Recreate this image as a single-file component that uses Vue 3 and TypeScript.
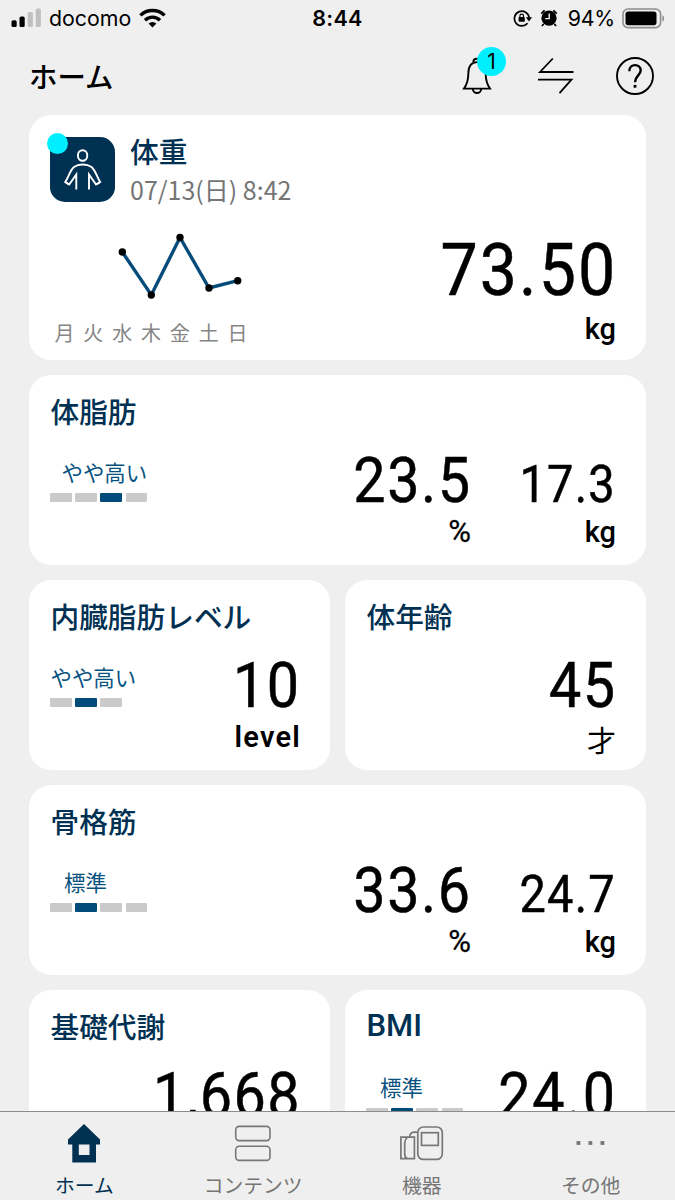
<script setup lang="ts">
interface Reading {
  value: string
  unit: string
  size: 'main' | 'sub'
  unitStyle?: 'cjk' | 'sign' | 'word'
}

interface Level {
  label: string
  steps: number
  active: number
  align: 'start' | 'shift' | 'end'
}

interface Metric {
  title: string
  wide: boolean
  latin?: boolean
  level?: Level
  readings: Reading[]
}

const metrics: Metric[] = [
  {
    title: '体脂肪',
    wide: true,
    level: { label: 'やや高い', steps: 4, active: 3, align: 'end' },
    readings: [
      { value: '23.5', unit: '%', size: 'main', unitStyle: 'sign' },
      { value: '17.3', unit: 'kg', size: 'sub' },
    ],
  },
  {
    title: '内臓脂肪レベル',
    wide: false,
    level: { label: 'やや高い', steps: 3, active: 2, align: 'start' },
    readings: [{ value: '10', unit: 'level', size: 'main', unitStyle: 'word' }],
  },
  {
    title: '体年齢',
    wide: false,
    readings: [{ value: '45', unit: '才', size: 'main', unitStyle: 'cjk' }],
  },
  {
    title: '骨格筋',
    wide: true,
    level: { label: '標準', steps: 4, active: 2, align: 'shift' },
    readings: [
      { value: '33.6', unit: '%', size: 'main', unitStyle: 'sign' },
      { value: '24.7', unit: 'kg', size: 'sub' },
    ],
  },
  {
    title: '基礎代謝',
    wide: false,
    readings: [{ value: '1,668', unit: '', size: 'main' }],
  },
  {
    title: 'BMI',
    wide: false,
    latin: true,
    level: { label: '標準', steps: 4, active: 2, align: 'shift' },
    readings: [{ value: '24.0', unit: '', size: 'main' }],
  },
]

const days: string[] = ['月', '火', '水', '木', '金', '土', '日']

const points: [number, number][] = [
  [72.3, 22],
  [101.3, 65],
  [130, 7.5],
  [159, 58],
  [187.7, 50.7],
]
const line = points.map((p) => p.join(',')).join(' ')
</script>

<template>
  <div class="screen">
    <div class="status">
      <div class="status-left">
        <svg class="signal" width="31" height="20" viewBox="0 0 31 20">
          <rect x="0.5" y="12.3" width="5.2" height="6.7" rx="1.6" fill="#000" />
          <rect x="8.5" y="8.6" width="5.2" height="10.4" rx="1.6" fill="#000" />
          <rect x="16.7" y="4" width="5.2" height="15" rx="1.6" fill="#c0c0c0" />
          <rect x="24.7" y="0.5" width="5.2" height="18.5" rx="1.6" fill="#c0c0c0" />
        </svg>
        <span class="carrier">docomo</span>
        <svg class="wifi" width="27" height="20" viewBox="0 0 27 20">
          <g fill="none" stroke="#000" stroke-width="3.4">
            <path d="M1.4 7.4a17.3 17.3 0 0 1 24.2 0" />
            <path d="M6 12.2a10.7 10.7 0 0 1 15 0" />
          </g>
          <path d="M13.5 19.6l-3.9-4a5.6 5.6 0 0 1 7.8 0z" />
        </svg>
      </div>
      <span class="clock">8:44</span>
      <div class="status-right">
        <svg width="20" height="18" viewBox="0 0 20 18">
          <path d="M14.6 14.2a7.4 7.4 0 1 1 1.6-5.6" fill="none" stroke="#000" stroke-width="1.7" />
          <path d="M12.9 8.2h6.2l-3.2 4.3z" />
          <rect x="5.6" y="8" width="6.2" height="4.8" rx="0.8" />
          <path d="M6.900 8.400V6.900a1.800 1.800 0 0 1 3.600 0v1.500" fill="none" stroke="#000" stroke-width="1.200" />
        </svg>
        <svg class="alarm" width="18" height="18" viewBox="0 0 18 18">
          <circle cx="9" cy="9.2" r="7.6" />
          <path d="M1.3 4.6l3.3-3.2M16.7 4.6l-3.3-3.2M3.6 15l-1.6 2M14.4 15l1.6 2" stroke="#000" stroke-width="1.8" />
          <path d="M9.2 4.6v5H5.2" fill="none" stroke="#efefef" stroke-width="1.4" />
        </svg>
        <span class="percent">94%</span>
        <svg class="battery" width="44" height="21" viewBox="0 0 44 21">
          <rect x="1" y="1" width="37.6" height="18.6" rx="5" fill="none" stroke="#8d8d8d" stroke-width="1.6" />
          <rect x="3.5" y="3.6" width="31" height="13.6" rx="2.6" />
          <path d="M40.4 7.2c2.3 1 2.3 5.400 0 6.400z" fill="#8d8d8d" />
        </svg>
      </div>
    </div>

    <header class="header">
      <h1>ホーム</h1>
      <div class="actions">
        <button class="action bell" aria-label="通知">
          <svg width="30" height="40" viewBox="0 0 30 40" fill="none" stroke="#000" stroke-width="1.9">
            <path d="M11.300 6.100C11.300 1.600 18.700 1.600 18.700 6.100" />
            <path d="M2 32.600C5.500 27.500 6.300 24 6.300 18C6.300 10.500 9 6.100 15 6.100C21 6.100 23.700 10.500 23.700 18C23.700 24 24.500 27.500 28 32.600Z" />
            <path d="M10.800 32.800a4.200 4.200 0 0 0 8.400 0" />
          </svg>
          <span class="badge">1</span>
        </button>
        <button class="action swap" aria-label="同期">
          <svg width="38" height="38" viewBox="0 0 38 38" fill="none" stroke="#000" stroke-width="1.8">
            <path d="M15.800 1.500L3 15H36.500M1 22.700H34.500L22.500 36.200" />
          </svg>
        </button>
        <button class="action help" aria-label="ヘルプ">
          <svg width="40" height="40" viewBox="0 0 40 40" fill="none" stroke="#000">
            <circle cx="20" cy="20" r="18" stroke-width="1.900" />
            <path d="M14.300 15.200C14.300 7.200 25.700 7.200 25.700 14.500C25.700 19.200 20 19.700 20 26.200" stroke-width="2.400" />
            <rect x="18.600" y="28.900" width="2.800" height="2.800" fill="#000" stroke="none" />
          </svg>
        </button>
      </div>
    </header>

    <main class="content">
      <section class="card weight">
        <div class="weight-head">
          <div class="app-icon">
            <svg width="65" height="65" viewBox="0 0 65 65" fill="none" stroke="#fff" stroke-width="1.900">
              <ellipse cx="32.600" cy="18.500" rx="4.700" ry="5.300" />
              <path d="M26.300 52.500V37.500L19.200 47.500L16.200 45.500M39 52.500V37.500L46 47.500L49.200 45.500" />
              <path d="M19 47.500L15.200 45C18.500 40.500 19.500 34 24 30C28.500 26.700 37 26.700 41.500 30C46 34 47 40.500 50.200 45L46.300 47.500" />
            </svg>
            <i class="dot"></i>
          </div>
          <div>
            <h2>体重</h2>
            <p class="date">07/13(日) 8:42</p>
          </div>
        </div>
        <div class="weight-body">
          <div class="week">
            <svg width="202" height="80" viewBox="0 0 202 80">
              <polyline :points="line" fill="none" stroke="#064c7a" stroke-width="3.400" />
              <circle v-for="(p, i) in points" :key="i" :cx="p[0]" :cy="p[1]" r="3.700" />
            </svg>
            <div class="days">
              <span v-for="d in days" :key="d">{{ d }}</span>
            </div>
          </div>
          <div class="reading hero">
            <div class="value">73.50</div>
            <div class="unit">kg</div>
          </div>
        </div>
      </section>

      <section v-for="m in metrics" :key="m.title" class="card metric" :class="{ wide: m.wide }">
        <h2 :class="{ latin: m.latin }">{{ m.title }}</h2>
        <div class="metric-body">
          <div v-if="m.level" class="level">
            <span class="level-label" :class="m.level.align">{{ m.level.label }}</span>
            <div class="bars">
              <i v-for="n in m.level.steps" :key="n" :class="{ on: n === m.level.active }"></i>
            </div>
          </div>
          <div class="readings">
            <div v-for="r in m.readings" :key="r.value" class="reading" :class="r.size">
              <div class="value">{{ r.value }}</div>
              <div v-if="r.unit" class="unit" :class="r.unitStyle">{{ r.unit }}</div>
            </div>
          </div>
        </div>
      </section>
    </main>

    <nav class="tabs">
      <a class="tab current">
        <svg width="44" height="40" viewBox="0 0 44 40">
          <path fill-rule="evenodd" fill="#003153" d="M22 1L38 16.500V21.500H34V39.500H10.300V21.500H6V16.500ZM16.800 21.500V32H27.500V21.500Z" />
        </svg>
        <span>ホーム</span>
      </a>
      <a class="tab">
        <svg width="44" height="40" viewBox="0 0 44 40" fill="none" stroke="#777" stroke-width="1.600">
          <rect x="4.700" y="3.400" width="34.300" height="14.200" rx="3.500" />
          <rect x="4.700" y="23.200" width="34.300" height="14.200" rx="3.500" />
        </svg>
        <span>コンテンツ</span>
      </a>
      <a class="tab">
        <svg width="44" height="40" viewBox="0.800 0 44 40" fill="none" stroke="#777" stroke-width="1.700">
          <rect x="18.600" y="4" width="24.500" height="32.400" rx="5.500" />
          <rect x="22.300" y="9.700" width="16.800" height="12.700" />
          <path d="M1.700 14.100H15.200V35.600H1.700ZM18.600 9.200H15.500C12.500 9.200 10.600 10.500 10.400 14M8.200 14.100C6 16 5.500 17.500 5.500 20V30.500C5.500 33.300 6.500 35 8.500 35.600" />
        </svg>
        <span>機器</span>
      </a>
      <a class="tab">
        <svg width="44" height="40" viewBox="0 0 44 40" fill="#777">
          <rect x="7.500" y="18.100" width="3.800" height="3.800" />
          <rect x="19.500" y="18.100" width="3.800" height="3.800" />
          <rect x="31.500" y="18.100" width="3.800" height="3.800" />
        </svg>
        <span>その他</span>
      </a>
    </nav>
  </div>
</template>

<style>
body {
  background: #efefef;
}
</style>

<style scoped>
.screen {
  width: 675px;
  height: 1200px;
  display: flex;
  flex-direction: column;
  overflow: hidden;
  background: #efefef;
  color: #000;
  font-family: 'Noto Sans CJK JP', sans-serif;
}

h1,
h2,
p {
  margin: 0;
}

svg {
  display: block;
  flex: none;
}

.status {
  flex: none;
  height: 36px;
  display: grid;
  grid-template-columns: 1fr auto 1fr;
  align-items: center;
  font-family: Inter, sans-serif;
  font-size: 22px;
  line-height: 36px;
}

.status-left,
.status-right {
  display: flex;
  align-items: center;
}

.status-left {
  padding-left: 11px;
}

.carrier {
  margin-left: 7px;
  width: 82px;
  font-size: 21.300px;
}

.wifi {
  margin-left: 8px;
}

.clock {
  font-size: 21.500px;
  font-weight: 600;
  letter-spacing: 0.3px;
}

.status-right {
  justify-content: flex-end;
  padding-right: 9px;
}

.alarm {
  margin-left: 7px;
}

.percent {
  margin: 0 7px 0 10px;
  font-size: 21.300px;
  letter-spacing: -0.2px;
}

.header {
  flex: none;
  height: 79px;
  padding: 0 20px 0 29px;
  display: flex;
  align-items: center;
  justify-content: space-between;
}

h1 {
  margin-top: 1px;
  font-size: 28.400px;
  font-weight: 500;
  line-height: 40px;
}

.actions {
  display: flex;
  align-items: center;
}

.action {
  position: relative;
  padding: 0;
  border: 0;
  background: none;
}

.swap {
  margin-left: 45px;
}

.help {
  margin-left: 40px;
}

.badge {
  position: absolute;
  left: 15px;
  top: -9px;
  width: 29px;
  height: 29px;
  border-radius: 50%;
  background: #00efff;
  font-family: Inter, sans-serif;
  font-size: 21px;
  line-height: 29px;
  text-align: center;
}

.content {
  flex: 1;
  min-height: 0;
  overflow: hidden;
  padding: 0 29px;
  display: grid;
  grid-template-columns: 301px 301px;
  grid-template-rows: 245px;
  grid-auto-rows: 190px;
  gap: 15px;
  align-content: start;
}

.card {
  box-sizing: border-box;
  border-radius: 22px;
  background: #fff;
}

h2 {
  color: #003153;
  font-size: 28.700px;
  font-weight: 500;
  line-height: 42px;
}

.latin {
  font-family: Roboto, sans-serif;
  font-size: 31px;
}

.weight {
  grid-column: 1 / -1;
  padding: 15px 30px 0 21px;
}

.weight-head {
  display: flex;
  gap: 15px;
}

.app-icon {
  position: relative;
  width: 65px;
  height: 65px;
  margin-top: 7px;
  border-radius: 15px;
  background: #003153;
}

.dot {
  position: absolute;
  left: -3px;
  top: -4px;
  width: 21px;
  height: 21px;
  border-radius: 50%;
  background: #00efff;
}

.date {
  color: #757575;
  font-size: 25px;
  line-height: 34px;
}

.weight-body {
  display: flex;
  justify-content: space-between;
  margin-top: 24px;
}

.days {
  width: 202px;
  margin-top: 8px;
  display: grid;
  grid-template-columns: repeat(7, 1fr);
  text-align: center;
  color: #858585;
  font-size: 20px;
  line-height: 30px;
}

.metric {
  padding: 15px 30px 0 21.500px;
}

.wide {
  grid-column: 1 / -1;
}

.metric-body {
  display: flex;
}

.level {
  margin-top: 24px;
}

.level-label {
  display: block;
  height: 32px;
  color: #07517f;
  font-size: 21.400px;
  line-height: 32px;
  white-space: nowrap;
}

.level-label.shift {
  padding-left: 13.500px;
}

.level-label.end {
  padding-left: 11px;
}

.bars {
  margin-top: 5px;
  margin-left: -0.500px;
  display: flex;
  gap: 3.700px;
}

.bars i {
  width: 21.500px;
  height: 9px;
  border-radius: 1px;
  background: #cacaca;
}

.bars i.on {
  background: #004b7a;
}

.readings {
  flex: 1;
  display: flex;
  justify-content: flex-end;
  align-items: baseline;
  margin-top: 19px;
}

.reading {
  font-family: Roboto, sans-serif;
  text-align: right;
  white-space: nowrap;
}

.reading.sub {
  width: 145px;
}

.value {
  margin-right: -1px;
  font-size: 62.500px;
  line-height: 60px;
  letter-spacing: 0.027em;
  transform: scaleX(0.92);
  transform-origin: right;
  -webkit-text-stroke: 0.500px #000;
}

.sub .value {
  margin-right: 0;
  font-size: 51px;
  line-height: 52px;
}

.hero .value {
  margin-top: 6px;
  font-size: 72px;
  line-height: 70px;
  letter-spacing: 0.032em;
}

.unit {
  margin-top: 1px;
  font-size: 29px;
  font-weight: 500;
  line-height: 40px;
}

.hero .unit {
  margin-top: 3px;
}

.unit.sign {
  font-size: 31px;
  font-weight: 400;
  -webkit-text-stroke: 0.300px #000;
}

.unit.word {
  margin-right: -1px;
  font-weight: 600;
  letter-spacing: 1.200px;
}

.unit.cjk {
  margin-top: 3px;
  font-family: 'Noto Sans CJK JP', sans-serif;
  font-weight: 400;
}

.tabs {
  flex: none;
  box-sizing: border-box;
  height: 89px;
  border-top: 1px solid #8c8c8c;
  display: grid;
  grid-template-columns: repeat(4, 1fr);
  background: #efefef;
}

.tab {
  display: flex;
  flex-direction: column;
  align-items: center;
  padding-top: 11px;
  color: #757575;
  font-size: 19.800px;
  line-height: 30px;
}

.tab span {
  margin-top: 7px;
}

.current {
  color: #003153;
}
</style>
